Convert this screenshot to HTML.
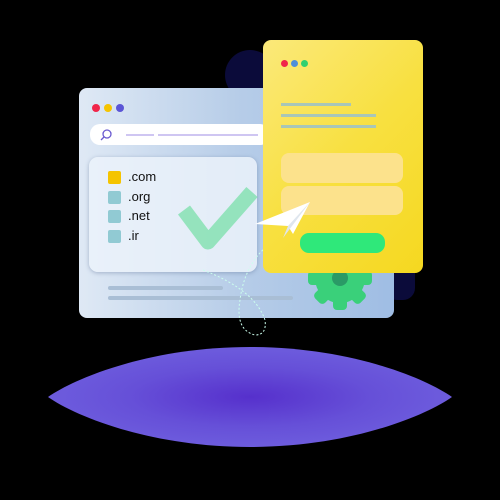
<!DOCTYPE html>
<html><head><style>
body{margin:0;width:500px;height:500px;background:#000;position:relative;overflow:hidden;font-family:"Liberation Sans",sans-serif}
.a{position:absolute}
</style></head><body>
<svg class="a" style="left:0;top:0" width="500" height="500"><defs><radialGradient id="g" cx="50%" cy="50%" r="50%"><stop offset="0" stop-color="#5630cc"/><stop offset=".6" stop-color="#6650d8"/><stop offset="1" stop-color="#6d5cdd"/></radialGradient></defs><path d="M48 397 C75 378 150 347 250 347 C350 347 425 378 452 397 C425 416 350 447 250 447 C150 447 75 416 48 397Z" fill="url(#g)"/></svg>
<div class="a" style="left:225px;top:50px;width:50px;height:50px;border-radius:50%;background:#0b0b3a"></div>
<div class="a" style="left:385px;top:255px;width:30px;height:45px;border-radius:12px;background:#0b0b3a"></div>
<div class="a" style="left:79px;top:88px;width:315px;height:230px;border-radius:8px;background:linear-gradient(90deg,#dfe9f5,#b7cde8 50%,#9fbde4)"></div>
<div class="a" style="left:92px;top:104px;width:8px;height:8px;border-radius:50%;background:#f0254a"></div>
<div class="a" style="left:104px;top:104px;width:8px;height:8px;border-radius:50%;background:#f5c400"></div>
<div class="a" style="left:116px;top:104px;width:8px;height:8px;border-radius:50%;background:#5b55d6"></div>
<div class="a" style="left:90px;top:124px;width:180px;height:21px;border-radius:10px;background:#fff"></div>
<svg class="a" style="left:99px;top:128px" width="14" height="14"><circle cx="8" cy="6" r="4" fill="none" stroke="#6a5ad0" stroke-width="1.3"/><line x1="5" y1="9" x2="2" y2="12" stroke="#6a5ad0" stroke-width="1.3"/></svg>
<div class="a" style="left:126px;top:134px;width:28px;height:2px;background:#cfc6f2"></div>
<div class="a" style="left:158px;top:134px;width:100px;height:2px;background:#cfc6f2"></div>
<div class="a" style="left:89px;top:157px;width:168px;height:115px;border-radius:9px;background:rgba(235,242,250,.85);box-shadow:0 1px 4px rgba(80,100,140,.4)"></div>
<svg class="a" style="left:170px;top:180px" width="90" height="80"><path d="M14 30 L38 62 L82 12" fill="none" stroke="#5fdc96" stroke-opacity=".6" stroke-width="15" stroke-linejoin="round"/></svg>
<div class="a" style="left:108px;top:171px;width:13px;height:13px;background:#f5c400;border-radius:2px"></div>
<div class="a" style="left:108px;top:191px;width:13px;height:13px;background:#91cad3;border-radius:2px"></div>
<div class="a" style="left:108px;top:210px;width:13px;height:13px;background:#91cad3;border-radius:2px"></div>
<div class="a" style="left:108px;top:230px;width:13px;height:13px;background:#91cad3;border-radius:2px"></div>
<div class="a" style="left:128px;top:169px;font-size:13px;line-height:16px;color:#111">.com</div>
<div class="a" style="left:128px;top:189px;font-size:13px;line-height:16px;color:#111">.org</div>
<div class="a" style="left:128px;top:208px;font-size:13px;line-height:16px;color:#111">.net</div>
<div class="a" style="left:128px;top:228px;font-size:13px;line-height:16px;color:#111">.ir</div>
<div class="a" style="left:108px;top:286px;width:115px;height:4px;border-radius:2px;background:#a9bed5"></div>
<div class="a" style="left:108px;top:296px;width:185px;height:4px;border-radius:2px;background:#a9bed5"></div>
<svg class="a" style="left:297px;top:240px" width="86" height="72"><g fill="#3ad07a"><circle cx="43" cy="38" r="25"/><rect x="36" y="6" width="14" height="64" rx="4"/><rect x="11" y="31" width="64" height="14" rx="4"/><rect x="36" y="6" width="14" height="64" rx="4" transform="rotate(45 43 38)"/><rect x="36" y="6" width="14" height="64" rx="4" transform="rotate(-45 43 38)"/></g><circle cx="43" cy="38" r="8" fill="#2a9a66"/></svg>
<svg class="a" style="left:195px;top:180px" width="120" height="160"><path d="M8 90 Q60 110 70 140 Q72 155 60 155 Q40 150 45 120 Q50 80 80 60" fill="none" stroke="#cfe" stroke-width="1" stroke-dasharray="2 2"/></svg>
<div class="a" style="left:263px;top:40px;width:160px;height:233px;border-radius:8px;background:linear-gradient(135deg,#fbe97a,#f8e040 50%,#f5d820)"></div>
<div class="a" style="left:281px;top:60px;width:7px;height:7px;border-radius:50%;background:#f0254a"></div>
<div class="a" style="left:291px;top:60px;width:7px;height:7px;border-radius:50%;background:#4e8fd8"></div>
<div class="a" style="left:301px;top:60px;width:7px;height:7px;border-radius:50%;background:#30d070"></div>
<div class="a" style="left:281px;top:103px;width:70px;height:3px;background:#a8c6b8"></div>
<div class="a" style="left:281px;top:114px;width:95px;height:3px;background:#a8c6b8"></div>
<div class="a" style="left:281px;top:125px;width:95px;height:3px;background:#a8c6b8"></div>
<div class="a" style="left:281px;top:153px;width:122px;height:30px;border-radius:8px;background:#fce28c"></div>
<div class="a" style="left:281px;top:186px;width:122px;height:29px;border-radius:8px;background:#fce28c"></div>
<div class="a" style="left:300px;top:233px;width:85px;height:20px;border-radius:9px;background:#2fe87a"></div>
<svg class="a" style="left:253px;top:198px" width="60" height="45"><path d="M2 26 L57 4 L40 36 L35 28 Z" fill="#fff"/><path d="M35 28 L57 4 L30 40 Z" fill="#dfe6ee"/></svg>
</body></html>
